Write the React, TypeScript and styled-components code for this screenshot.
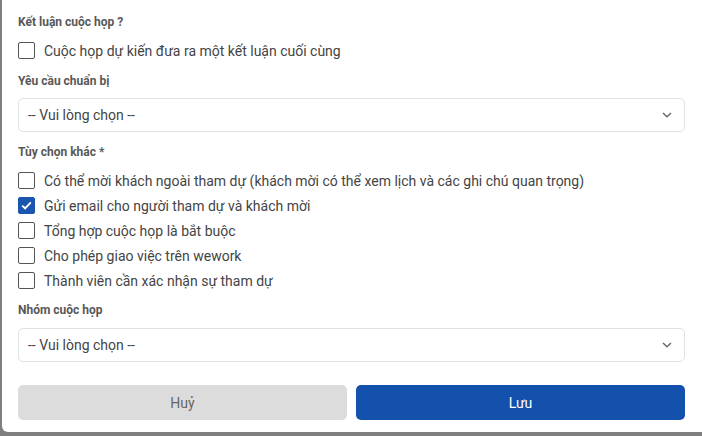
import React from 'react';
import styled, { createGlobalStyle } from 'styled-components';

const GlobalStyle = createGlobalStyle`
  html, body {
    margin: 0;
    padding: 0;
    background: #7f7f7f;
    font-family: Roboto, "Noto Sans", Arial, sans-serif;
    overflow: hidden;
  }
  * { box-sizing: border-box; }
`;

const Modal = styled.div`
  margin-left: 2px;
  width: 708px;
  height: 432px;
  background: #fff;
  border-radius: 0 0 6px 6px;
  padding: 14px 25px 0 16px;
  display: flex;
  flex-direction: column;
`;

const Label = styled.div<{ $top?: number }>`
  font-size: 12px;
  line-height: 16px;
  font-weight: 700;
  color: #585858;
  margin-top: ${(p) => p.$top ?? 0}px;
`;

const Options = styled.div`
  display: flex;
  flex-direction: column;
  margin-top: 8px;
`;

const Row = styled.label`
  display: flex;
  align-items: center;
  gap: 9px;
  height: 25px;
  font-size: 14px;
  color: #444;
  cursor: pointer;
`;

const Box = styled.span<{ $checked?: boolean }>`
  width: 17px;
  height: 17px;
  flex: none;
  border-radius: 2px;
  border: 1px solid ${(p) => (p.$checked ? '#1a55b0' : '#555')};
  background: ${(p) => (p.$checked ? '#1a55b0' : '#fff')};
  display: flex;
  align-items: center;
  justify-content: center;
`;

const Select = styled.div<{ $top: number }>`
  margin-top: ${(p) => p.$top}px;
  height: 34px;
  border: 1px solid #e2e2e2;
  border-radius: 5px;
  display: flex;
  align-items: center;
  justify-content: space-between;
  padding: 0 12px 0 9px;
  font-size: 14px;
  color: #444;
`;

const Actions = styled.div`
  display: grid;
  grid-template-columns: 1fr 1fr;
  gap: 9px;
  margin-top: 23px;
`;

const Button = styled.button<{ $primary?: boolean }>`
  height: 35px;
  border: none;
  border-radius: 5px;
  font-family: inherit;
  font-size: 14px;
  background: ${(p) => (p.$primary ? '#1351ad' : '#dcdcdc')};
  color: ${(p) => (p.$primary ? '#fff' : '#666')};
`;

const Check = ({ checked, text }: { checked?: boolean; text: string }) => (
  <Row>
    <Box $checked={checked}>
      {checked && (
        <svg width="11" height="9" viewBox="0 0 11 9">
          <path d="M1.2 4.6 L4.1 7.3 L9.8 1.4" fill="none" stroke="#fff" strokeWidth="1.9" />
        </svg>
      )}
    </Box>
    {text}
  </Row>
);

const Chevron = () => (
  <svg width="10" height="6" viewBox="0 0 10 6">
    <path d="M1 1 L5 4.8 L9 1" fill="none" stroke="#666" strokeWidth="1.4" />
  </svg>
);

export default function App() {
  return (
    <>
      <GlobalStyle />
      <Modal>
        <Label>Kết luận cuộc họp ?</Label>
        <Options>
          <Check text="Cuộc họp dự kiến đưa ra một kết luận cuối cùng" />
        </Options>
        <Label $top={10}>Yêu cầu chuẩn bị</Label>
        <Select $top={9}>
          -- Vui lòng chọn --
          <Chevron />
        </Select>
        <Label $top={12}>Tùy chọn khác *</Label>
        <Options>
          <Check text="Có thể mời khách ngoài tham dự (khách mời có thể xem lịch và các ghi chú quan trọng)" />
          <Check checked text="Gửi email cho người tham dự và khách mời" />
          <Check text="Tổng hợp cuộc họp là bắt buộc" />
          <Check text="Cho phép giao việc trên wework" />
          <Check text="Thành viên cần xác nhận sự tham dự" />
        </Options>
        <Label $top={9}>Nhóm cuộc họp</Label>
        <Select $top={10}>
          -- Vui lòng chọn --
          <Chevron />
        </Select>
        <Actions>
          <Button>Huỷ</Button>
          <Button $primary>Lưu</Button>
        </Actions>
      </Modal>
    </>
  );
}
